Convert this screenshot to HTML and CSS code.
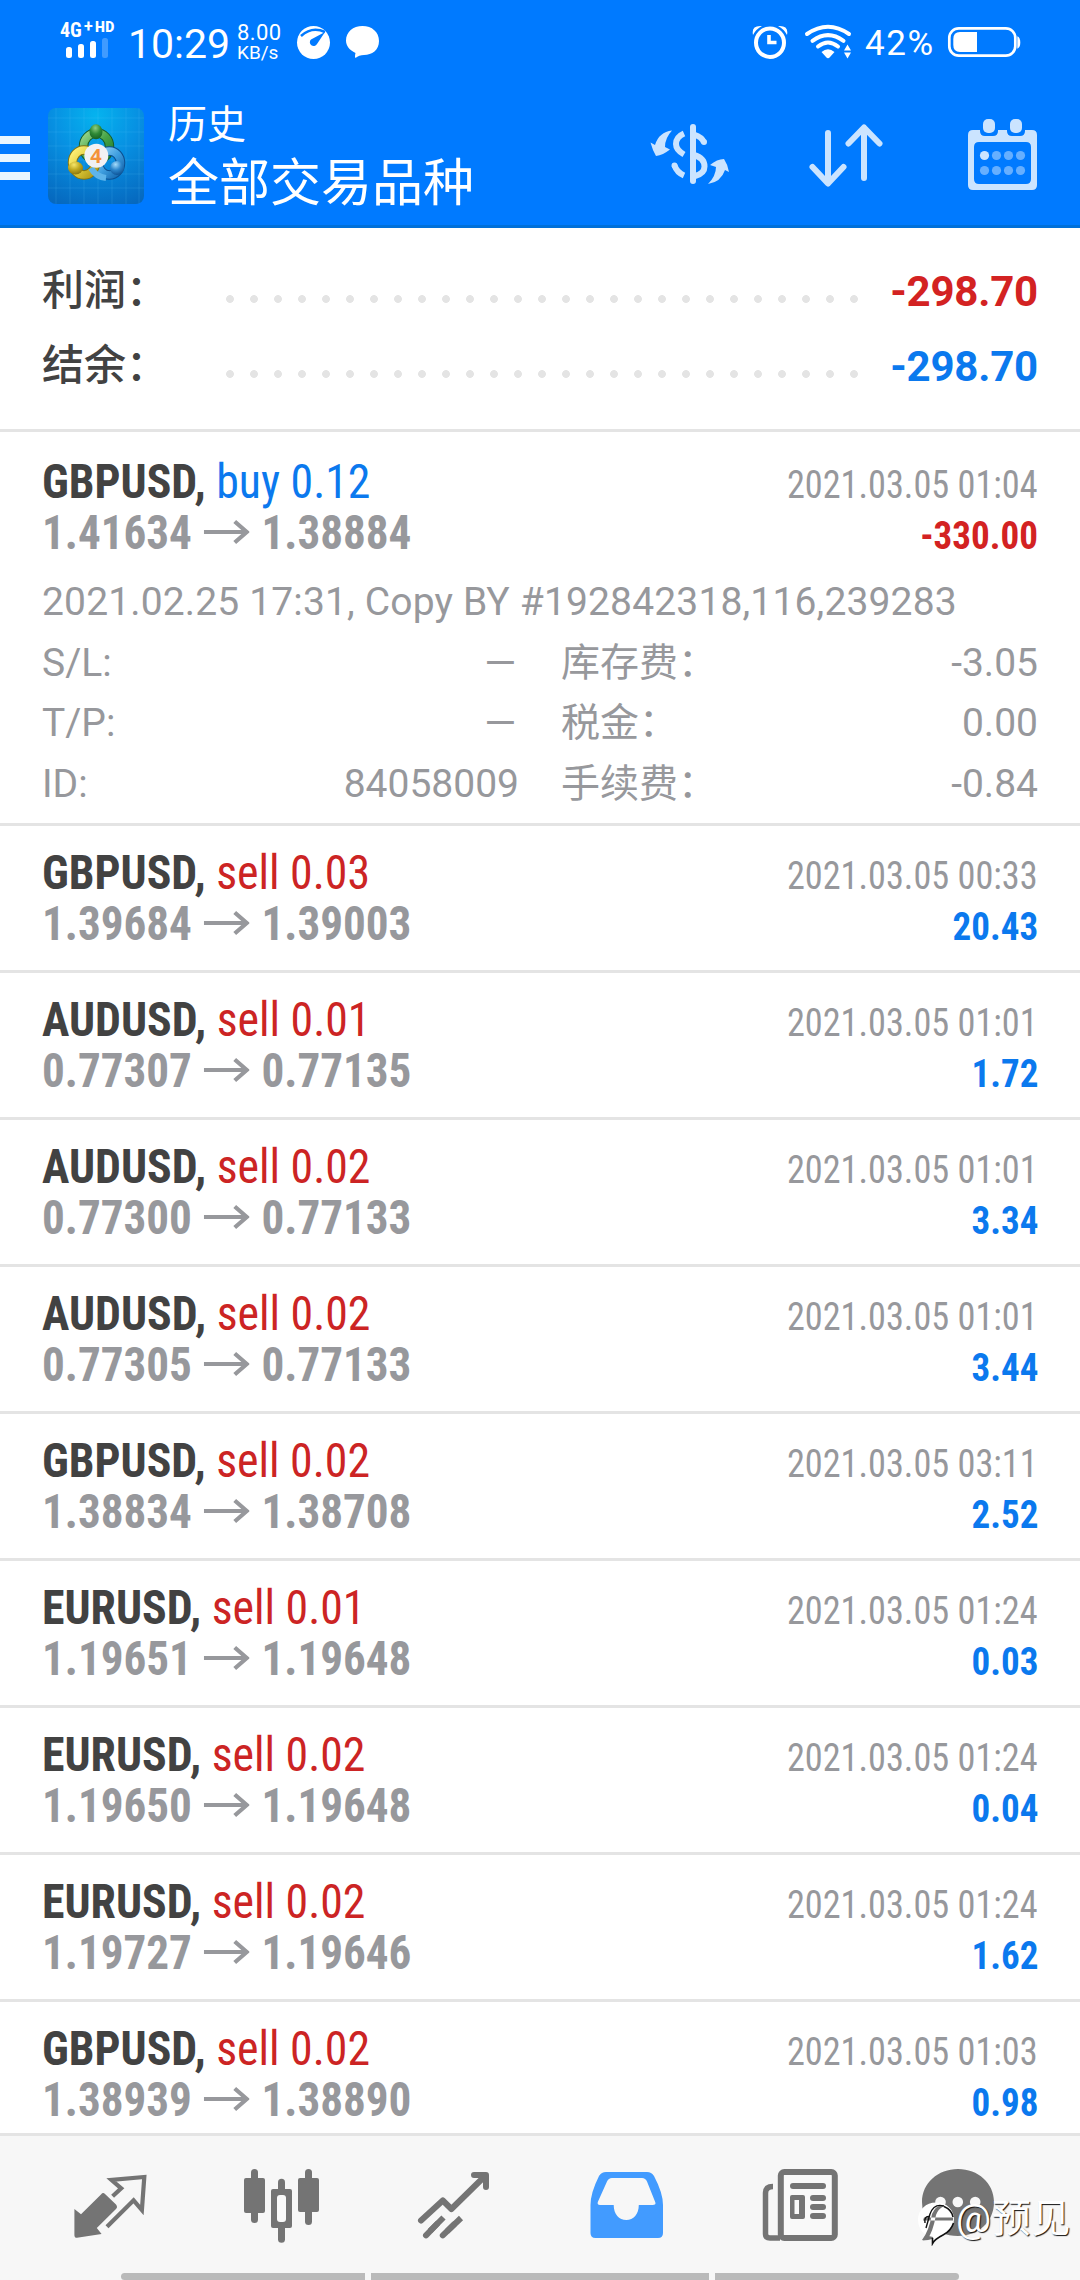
FILE: index.html
```html
<!DOCTYPE html>
<html lang="zh-CN">
<head>
<meta charset="utf-8">
<title>历史</title>
<link rel="stylesheet" href="styles.css">
</head>
<body>
<svg class="defs" width="0" height="0" aria-hidden="true">
  <symbol id="arrow" viewBox="0 0 46 26" preserveAspectRatio="none"><path d="M0 13H42M31 2.5L43 13L31 23.500" fill="none" stroke="currentColor" stroke-width="4.200"/></symbol>
</svg>
<div class="screen">
  <header class="top">
    <div class="status">
      <div class="signal">
        <div class="net"><span class="g4">4G</span><span class="plus">+</span><span class="hd">HD</span></div>
        <svg width="44" height="21" viewBox="0 0 44 21"><g fill="#fff"><rect x="1" y="9" width="6" height="11" rx="2.500"/><rect x="13" y="6" width="6" height="14" rx="2.500"/><rect x="25" y="3" width="6" height="17" rx="2.500"/><rect x="37" y="0" width="6" height="20" rx="2.500" opacity=".25"/></g></svg>
      </div>
      <span class="clock">10:29</span>
      <div class="speed"><span>8.00</span><span class="unit">KB/s</span></div>
      <svg class="st-icons" width="96" height="84" viewBox="290 0 96 84">
        <ellipse cx="313.500" cy="42.500" rx="16.500" ry="16.500" fill="#fff"/>
        <path d="M301 36Q312 26 325 32" fill="none" stroke="#007aff" stroke-width="2.500"/>
        <path d="M325 32L317 44A3.800 3.800 0 1 1 311 39.500Z" fill="#007aff"/>
        <path d="M362.500 26C372 26 379 32 379 41C379 50 372 55 364 55Q359 55 355.500 58Q354.500 57 355.500 53C349.500 50 346 46 346 40.500C346 32 353 26 362.500 26Z" fill="#fff"/>
      </svg>
      <svg class="st-right" width="110" height="84" viewBox="750 0 110 84">
        <g fill="none" stroke="#fff" stroke-linecap="round">
          <ellipse cx="770" cy="42.700" rx="14" ry="14.300" stroke-width="4"/>
          <path d="M769 35V42.500H776.500" stroke-width="3.600" stroke-linecap="butt"/>
          <path d="M807 34Q828 19.500 849 34" stroke-width="4"/>
          <path d="M812.500 40.800Q828 29.500 843.500 40.800" stroke-width="4"/>
          <path d="M818 46.500Q828 38.500 838 46.500" stroke-width="4"/>
        </g>
        <g fill="#fff">
          <path d="M753 35Q751 25 762 26Q756 29 753 35ZM787 35Q789 25 778 26Q784 29 787 35Z"/>
          <path d="M821.500 52Q828 46.500 834.500 52L830 57Q828 59.500 826 57Z"/>
          <path d="M844 50.500L847.500 44.500L851 50.500ZM844 52.500L847.500 58.500L851 52.500Z"/>
        </g>
      </svg>
      <span class="pct">42%</span>
      <svg class="battery" width="76" height="84" viewBox="946 0 76 84">
        <rect x="949.300" y="28.300" width="66" height="27.400" rx="9.500" fill="none" stroke="#fff" stroke-width="2.700"/>
        <path d="M977 32V52H960Q953.300 52 953.300 45V39Q953.300 32 960 32Z" fill="#fff"/>
        <path d="M1017.300 36.300Q1020.300 37.500 1020.300 42.500Q1020.300 47.500 1017.300 48.700Z" fill="#fff"/>
      </svg>
    </div>
    <div class="appbar">
      <svg width="48" height="141" viewBox="0 84 48 141"><path d="M0 136H30V144H0ZM0 154H30V162H0ZM0 172H30V180H0Z" fill="#e9f6ff"/></svg>
      <svg class="logo" width="96" height="96" viewBox="0 0 96 96">
        <defs>
          <radialGradient id="bg" cx=".5" cy=".08" r="1"><stop offset="0" stop-color="#05b3ef"/><stop offset=".45" stop-color="#0790e2"/><stop offset="1" stop-color="#0668be"/></radialGradient>
          <linearGradient id="gr" x1="0" y1="0" x2="1" y2="1"><stop offset="0" stop-color="#9ad68c"/><stop offset=".5" stop-color="#48a548"/><stop offset="1" stop-color="#1e7a2c"/></linearGradient>
          <linearGradient id="ye" x1="0" y1="0" x2="1" y2="1"><stop offset="0" stop-color="#fff27a"/><stop offset=".5" stop-color="#dfcb3a"/><stop offset="1" stop-color="#ad9718"/></linearGradient>
          <linearGradient id="bl" x1="0" y1="0" x2="1" y2="1"><stop offset="0" stop-color="#8fd0f6"/><stop offset=".5" stop-color="#3f9fe0"/><stop offset="1" stop-color="#1468b0"/></linearGradient>
          <radialGradient id="gh" cx=".45" cy=".25" r=".8"><stop offset="0" stop-color="#8fce82"/><stop offset=".5" stop-color="#2f8a36"/><stop offset="1" stop-color="#145c20"/></radialGradient>
          <radialGradient id="yh" cx=".4" cy=".25" r=".8"><stop offset="0" stop-color="#f6e66a"/><stop offset=".5" stop-color="#bfa820"/><stop offset="1" stop-color="#85700c"/></radialGradient>
          <radialGradient id="bh" cx=".4" cy=".25" r=".8"><stop offset="0" stop-color="#a5dcfb"/><stop offset=".5" stop-color="#2c86cc"/><stop offset="1" stop-color="#0b4f92"/></radialGradient>
        </defs>
        <rect width="96" height="96" rx="8" fill="url(#bg)"/>
        <path d="M8 0V96M22 0V96M36 0V96M50 0V96M64 0V96M78 0V96M91 0V96M0 10H96M0 24H96M0 38H96M0 52H96M0 66H96M0 80H96" stroke="#6bd0ff" stroke-opacity=".16" fill="none"/>
        <ellipse cx="48.500" cy="38.500" rx="13" ry="13.500" fill="none" stroke="#155c28" stroke-width="9.500"/>
        <ellipse cx="48.500" cy="38.500" rx="13" ry="13.500" fill="none" stroke="url(#gr)" stroke-width="7.500"/>
        <ellipse cx="61.500" cy="55" rx="11" ry="12" fill="none" stroke="#0c4f90" stroke-width="9.500"/>
        <ellipse cx="61.500" cy="55" rx="11" ry="12" fill="none" stroke="url(#bl)" stroke-width="7.500"/>
        <ellipse cx="36" cy="54.500" rx="11.500" ry="12.500" fill="none" stroke="#83720f" stroke-width="9.500"/>
        <ellipse cx="36" cy="54.500" rx="11.500" ry="12.500" fill="none" stroke="url(#ye)" stroke-width="7.500"/>
        <path d="M43 60Q48 69 58 70" fill="none" stroke="#5eb4ea" stroke-width="6"/>
        <ellipse cx="48" cy="23.800" rx="6.500" ry="7.500" fill="url(#gh)"/>
        <ellipse cx="27.500" cy="60" rx="7.500" ry="6.500" fill="url(#yh)"/>
        <ellipse cx="69" cy="60" rx="7" ry="7" fill="url(#bh)"/>
        <circle cx="48.300" cy="47.800" r="12" fill="#f1f1f3"/>
        <text x="48" y="55" class="four">4</text>
      </svg>
      <div class="titles"><div class="t1">历史</div><div class="t2">全部交易品种</div></div>
      <svg width="90" height="141" viewBox="645 84 90 141">
        <g fill="none" stroke="#cbe4ff" stroke-width="6">
          <path d="M693 127V181" stroke-linecap="round"/>
          <path d="M684 133.500Q676 137 676 144Q676 150 684 154.500"/>
          <path d="M674.500 165.500Q677 172.500 684 175.500M704 142.500Q702 137 694 134.500"/>
          <path d="M674.500 165.500V165.500M704 142V142" stroke-linecap="round"/>
          <path d="M694 155Q704.500 158 704.500 166.500Q704.500 173.500 695 176"/>
        </g>
        <g fill="#cbe4ff">
          <path d="M672 130.500Q659 132 655 145L650.500 142.500Q652.500 150 656 156Q663 155 670 149.500L665 147Q665 138 672 130.500Z"/>
          <path d="M708 184Q721 182 725 170L729 172Q728 165 724 159Q717 159 710 165L716 167Q716 176 708 184Z"/>
        </g>
      </svg>
      <svg class="sort" width="74" height="141" viewBox="809 84 74 141"><path d="M828 133V183M812.500 167L828 183.500L843.500 167M864 178V128M848.500 143.500L864 127.500L879.500 143.500" fill="none" stroke="#cbe4ff" stroke-width="6" stroke-linecap="round" stroke-linejoin="round"/></svg>
      <svg class="cal" width="70" height="141" viewBox="968 84 70 141">
        <path fill-rule="evenodd" fill="#cbe4ff" d="M973 130H980V131Q980 136 985 136H993Q998 136 998 131V130H1007V131Q1007 136 1012 136H1020Q1025 136 1025 131V130H1032Q1037 130 1037 135V185Q1037 190 1032 190H973Q968 190 968 185V135Q968 130 973 130ZM979 142Q974 142 974 147V179Q974 184 979 184H1026Q1031 184 1031 179V147Q1031 142 1026 142Z"/>
        <rect x="983" y="119" width="12" height="14" rx="5" fill="#cbe4ff"/><rect x="1010" y="119" width="12" height="14" rx="5" fill="#cbe4ff"/>
        <circle cx="984.500" cy="155.500" r="4.600" fill="#cbe4ff"/>
        <g fill="#66afff"><circle cx="996.500" cy="155.500" r="4.600"/><circle cx="1008.500" cy="155.500" r="4.600"/><circle cx="1020.500" cy="155.500" r="4.600"/><circle cx="984.500" cy="170.500" r="4.600"/><circle cx="996.500" cy="170.500" r="4.600"/><circle cx="1008.500" cy="170.500" r="4.600"/><circle cx="1020.500" cy="170.500" r="4.600"/></g>
      </svg>
    </div>
  </header>

  <section class="summary">
    <div class="sum-row"><span class="sum-label">利润：</span><span class="dots"></span><span class="sum-val loss">-298.70</span></div>
    <div class="sum-row"><span class="sum-label">结余：</span><span class="dots"></span><span class="sum-val gain">-298.70</span></div>
  </section>

  <main class="list">
    <article class="deal open">
      <div class="line"><div class="sym"><b>GBPUSD,</b> <span class="buy">buy 0.12</span></div><time>2021.03.05 01:04</time></div>
      <div class="line"><div class="price"><span>1.41634</span><svg class="to"><use href="#arrow"/></svg><span>1.38884</span></div><div class="pl loss">-330.00</div></div>
      <div class="details">
        <div class="comment">2021.02.25 17:31, Copy BY #192842318,116,239283</div>
        <div class="kv"><span>S/L:</span><span class="dash">–</span></div><div class="kv"><span>库存费：</span><span>-3.05</span></div>
        <div class="kv"><span>T/P:</span><span class="dash">–</span></div><div class="kv"><span>税金：</span><span>0.00</span></div>
        <div class="kv"><span>ID:</span><span>84058009</span></div><div class="kv"><span>手续费：</span><span>-0.84</span></div>
      </div>
    </article>
    <article class="deal">
      <div class="line"><div class="sym"><b>GBPUSD,</b> <span class="sell">sell 0.03</span></div><time>2021.03.05 00:33</time></div>
      <div class="line"><div class="price"><span>1.39684</span><svg class="to"><use href="#arrow"/></svg><span>1.39003</span></div><div class="pl gain">20.43</div></div>
    </article>
    <article class="deal">
      <div class="line"><div class="sym"><b>AUDUSD,</b> <span class="sell">sell 0.01</span></div><time>2021.03.05 01:01</time></div>
      <div class="line"><div class="price"><span>0.77307</span><svg class="to"><use href="#arrow"/></svg><span>0.77135</span></div><div class="pl gain">1.72</div></div>
    </article>
    <article class="deal">
      <div class="line"><div class="sym"><b>AUDUSD,</b> <span class="sell">sell 0.02</span></div><time>2021.03.05 01:01</time></div>
      <div class="line"><div class="price"><span>0.77300</span><svg class="to"><use href="#arrow"/></svg><span>0.77133</span></div><div class="pl gain">3.34</div></div>
    </article>
    <article class="deal">
      <div class="line"><div class="sym"><b>AUDUSD,</b> <span class="sell">sell 0.02</span></div><time>2021.03.05 01:01</time></div>
      <div class="line"><div class="price"><span>0.77305</span><svg class="to"><use href="#arrow"/></svg><span>0.77133</span></div><div class="pl gain">3.44</div></div>
    </article>
    <article class="deal">
      <div class="line"><div class="sym"><b>GBPUSD,</b> <span class="sell">sell 0.02</span></div><time>2021.03.05 03:11</time></div>
      <div class="line"><div class="price"><span>1.38834</span><svg class="to"><use href="#arrow"/></svg><span>1.38708</span></div><div class="pl gain">2.52</div></div>
    </article>
    <article class="deal">
      <div class="line"><div class="sym"><b>EURUSD,</b> <span class="sell">sell 0.01</span></div><time>2021.03.05 01:24</time></div>
      <div class="line"><div class="price"><span>1.19651</span><svg class="to"><use href="#arrow"/></svg><span>1.19648</span></div><div class="pl gain">0.03</div></div>
    </article>
    <article class="deal">
      <div class="line"><div class="sym"><b>EURUSD,</b> <span class="sell">sell 0.02</span></div><time>2021.03.05 01:24</time></div>
      <div class="line"><div class="price"><span>1.19650</span><svg class="to"><use href="#arrow"/></svg><span>1.19648</span></div><div class="pl gain">0.04</div></div>
    </article>
    <article class="deal">
      <div class="line"><div class="sym"><b>EURUSD,</b> <span class="sell">sell 0.02</span></div><time>2021.03.05 01:24</time></div>
      <div class="line"><div class="price"><span>1.19727</span><svg class="to"><use href="#arrow"/></svg><span>1.19646</span></div><div class="pl gain">1.62</div></div>
    </article>
    <article class="deal">
      <div class="line"><div class="sym"><b>GBPUSD,</b> <span class="sell">sell 0.02</span></div><time>2021.03.05 01:03</time></div>
      <div class="line"><div class="price"><span>1.38939</span><svg class="to"><use href="#arrow"/></svg><span>1.38890</span></div><div class="pl gain">0.98</div></div>
    </article>
  </main>

  <nav class="tabs">
    <div class="tab-row">
      <svg viewBox="24 2136 172 137"><path d="M74.400 2209L81 2214.300L101 2194.500Q103 2192 105 2194L116 2204.500Q118 2207 116 2209L96.800 2228L101.600 2234L77 2237.800Q74.400 2238 74.400 2235Z" fill="#747474"/><path d="M112.600 2196.300L121.200 2188.300L111.500 2180L144.300 2177L141.900 2210L133.600 2200.300L107 2226.700" fill="none" stroke="#747474" stroke-width="4.200"/></svg>
      <svg viewBox="196 2136 172 137"><g fill="#747474"><rect x="244" y="2178" width="21" height="35" rx="2"/><rect x="251" y="2169" width="7" height="54" rx="3.500"/><rect x="271" y="2189" width="21" height="39" rx="2"/><rect x="278" y="2178.700" width="7" height="64" rx="3.500"/><rect x="298" y="2178" width="21" height="34" rx="2"/><rect x="305" y="2169" width="7" height="56" rx="3.500"/></g><rect x="277" y="2195" width="9" height="27" rx="3" fill="#f9f9f9"/></svg>
      <svg viewBox="368 2136 172 137"><g fill="none" stroke="#747474" stroke-width="6" stroke-linecap="round" stroke-linejoin="round"><path d="M421 2220.500L442.800 2200.500L451.400 2209L485 2176M474 2175H486V2187"/><path d="M426 2235.300L437 2224M442.800 2235.300L454 2224.500"/><path d="M430 2231L443.500 2217.500M447 2231.300L461 2218" stroke-linecap="butt"/></g></svg>
      <svg viewBox="540 2136 172 137"><path fill-rule="evenodd" fill="#429bff" d="M606 2172H647Q651.500 2172 654 2176Q663 2193 663 2205V2233Q663 2238 658 2238H595.500Q590.500 2238 590.500 2233V2205Q590.500 2193 599 2176Q601.500 2172 606 2172ZM612 2178Q608.500 2178 607 2181.500L597.800 2202Q597 2205 600 2205H613.700C613.700 2214 619 2220 626.300 2220C633.500 2220 638.800 2214 638.800 2205H652.500Q656.500 2205 655.200 2202L647 2181.500Q645.500 2178 642 2178Z"/></svg>
      <svg viewBox="712 2136 172 137"><rect x="780.800" y="2172" width="54" height="66" rx="3.500" fill="#f9f9f9" stroke="#747474" stroke-width="6"/><path d="M773 2186.500Q765.500 2186.500 765.500 2193V2234Q765.500 2238 770 2238H780" fill="none" stroke="#747474" stroke-width="5.500"/><g fill="#747474"><rect x="790" y="2183" width="36" height="6" rx="3"/><rect x="810" y="2195" width="16" height="6" rx="3"/><rect x="810" y="2204" width="16" height="6" rx="3"/><rect x="810" y="2213" width="16" height="6" rx="3"/><path fill-rule="evenodd" d="M792 2195H803Q805 2195 805 2197V2217Q805 2219 803 2219H792Q790 2219 790 2217V2197Q790 2195 792 2195ZM794.500 2200V2214H799V2200Z"/></g></svg>
      <svg viewBox="884 2136 172 137"><path d="M958 2169C978 2169 994 2183 994 2202C994 2222 978 2236 958 2236Q949 2236 942 2233Q934 2240.500 922.500 2240.500Q930 2234 929 2224Q922 2214 922 2202C922 2183 938 2169 958 2169Z" fill="#747474"/><g fill="#f7f7f7"><circle cx="940.500" cy="2202" r="5.300"/><circle cx="957.800" cy="2202" r="5.300"/><circle cx="975.200" cy="2202" r="5.300"/></g></svg>
    </div>
    <div class="gesture"><i class="g-left"></i><i></i><i class="g-right"></i></div>
  </nav>

  <div class="watermark">
    <svg width="40" height="46" viewBox="916 2200 40 46">
      <path d="M936 2202.500C947 2202.500 954 2210 954 2219C954 2229 946 2232 940 2237Q937 2239.500 934 2243L933 2237C924 2236 918 2229 918 2219.500C918 2210 926 2202.500 936 2202.500Z" fill="#fff"/>
      <path d="M944 2206.500Q952 2210 953 2217M953.500 2223Q951 2231 943 2235Q935 2239 932.500 2243.500V2238" fill="none" stroke="#111" stroke-width="1.600"/>
      <path d="M944 2206Q936 2204 932 2214Q929 2231 922 2240H927Q933 2232 936 2215Q938 2209 944 2206ZM924 2217.500H953V2220.500H923Z" fill="#747474"/>
      <path d="M925 2223Q924 2216 929 2216.500M944 2206Q934 2203 930 2214L926 2228" fill="none" stroke="#111" stroke-width="1.400"/>
    </svg>
    <span>@预见</span>
  </div>
</div>
</body>
</html>
```
FILE: styles.css
```css
* { box-sizing: border-box; }
body {
  margin: 0;
  background: #fff;
  font-family: Roboto, "Noto Sans CJK SC", sans-serif;
  color: #424242;
}
.defs { position: absolute; }
svg { display: block; flex: none; }
.screen {
  position: relative;
  width: 1080px;
  height: 2280px;
  display: flex;
  flex-direction: column;
  overflow: hidden;
}

/* header */
.top {
  flex: none;
  height: 228px;
  background: #007aff;
  border-bottom: 3px solid #0070d9;
  color: #fff;
}
.status { display: flex; height: 84px; padding-left: 60px; }
.signal { width: 68px; padding-top: 20px; }
.signal svg { margin: 1px 0 0 5px; }
.net { display: flex; height: 17px; line-height: 19px; font-weight: 700; }
.g4 { width: 24px; font: 700 20px/20px "Roboto Condensed", Roboto, sans-serif; }
.plus { width: 11px; font-size: 16px; line-height: 13px; }
.hd { font-size: 14px; line-height: 15px; font-weight: 900; letter-spacing: .3px; }
.clock { width: 109px; font-size: 41px; line-height: 88px; }
.speed { width: 53px; display: flex; flex-direction: column; padding-top: 23px; font-size: 22px; line-height: 20px; letter-spacing: .4px; }
.speed .unit { font-size: 19px; line-height: 20px; letter-spacing: 0; }
.st-right { margin-left: 364px; }
.pct { width: 80px; padding-left: 5px; font-size: 35px; line-height: 87px; letter-spacing: 1.600px; }
.battery { margin-left: 6px; }
.appbar { display: flex; height: 141px; }
.logo { margin-top: 24px; }
.four { font: 700 20px "Open Sans", sans-serif; fill: #f4923a; text-anchor: middle; }
.titles {
  width: 475px;
  margin-left: 26px;
  padding-top: 8px;
  font-family: "Noto Sans CJK SC", sans-serif;
  white-space: nowrap;
}
.titles > div { margin-left: -2px; line-height: 58px; }
.t1 { font-size: 39px; }
.t2 { font-size: 51px; }
.sort { margin-left: 74px; }
.cal { margin-left: 85px; }

/* totals */
.summary { flex: none; height: 204px; padding: 26px 42px 0; border-bottom: 3px solid #e4e4e4; }
.sum-row { display: flex; height: 75px; line-height: 75px; font-size: 42px; }
.sum-label { width: 176px; line-height: 66px; font-family: "Noto Sans CJK SC", sans-serif; font-weight: 500; }
.dots {
  width: 648px;
  height: 8px;
  margin-top: 41px;
  background: radial-gradient(circle at 12px 4px, #e4e4e4 3.500px, transparent 4.300px) 0 0 / 24px 8px;
}
.sum-val { flex: 1; text-align: right; font-weight: 700; letter-spacing: -.2px; }
.loss { color: #d32222; }
.gain { color: #0b79ee; }

/* deals */
.list { flex: 1; min-height: 0; overflow: hidden; }
.deal { height: 147px; padding: 21px 42px 0; border-bottom: 3px solid #e4e4e4; }
.deal.open { height: 394px; padding-top: 24px; }
.line {
  display: flex;
  justify-content: space-between;
  align-items: baseline;
  height: 51px;
  line-height: 51px;
  font-family: "Roboto Condensed", Roboto, sans-serif;
  white-space: nowrap;
}
/* squeeze the condensed face a little further */
.sym, .price { font-size: 48px; transform-origin: 0 50%; }
.sym { transform: scaleX(.954); }
.price { display: flex; font-weight: 700; color: #97989c; transform: scaleX(.94); }
.line time, .pl { font-size: 39px; line-height: 45px; transform-origin: 100% 50%; }
.line time { color: #97989c; transform: scaleX(.93); }
.pl { font-weight: 700; transform: scaleX(.95); }
.buy { color: #0b79ee; }
.sell { color: #cc2424; }
.to { width: 49px; height: 26px; margin: 12px 13px 0 12px; }
.details {
  display: grid;
  grid-template-columns: 1fr 1fr;
  column-gap: 42px;
  grid-auto-rows: 60.500px;
  margin-top: 14px;
  font-size: 39px;
  line-height: 60.500px;
  color: #97989c;
}
.comment { grid-column: 1 / -1; white-space: nowrap; letter-spacing: .15px; }
.kv { display: flex; justify-content: space-between; }
.dash { transform: scaleX(1.400); transform-origin: 100% 50%; }

/* bottom tabs */
.tabs { flex: none; height: 147px; background: #f7f7f7; border-top: 3px solid #e4e4e4; }
.tab-row { display: flex; padding-left: 24px; }
.tab-row svg { width: 172px; height: 137px; }
.gesture { display: flex; gap: 6px; height: 7px; padding: 0 121px; }
.gesture i { flex: 0 0 338px; background: #bababa; }
.gesture .g-left { flex-basis: 244px; border-radius: 4px 0 0 4px; }
.gesture .g-right { flex-basis: 244px; border-radius: 0 4px 4px 0; }

/* signature laid over the tab bar */
.watermark {
  position: absolute;
  left: 916px;
  top: 2200px;
  display: flex;
  color: #fff;
  font-size: 39px;
  line-height: 39px;
  letter-spacing: .8px;
  text-shadow: 1px 1px 1px #111;
  white-space: nowrap;
}
```
